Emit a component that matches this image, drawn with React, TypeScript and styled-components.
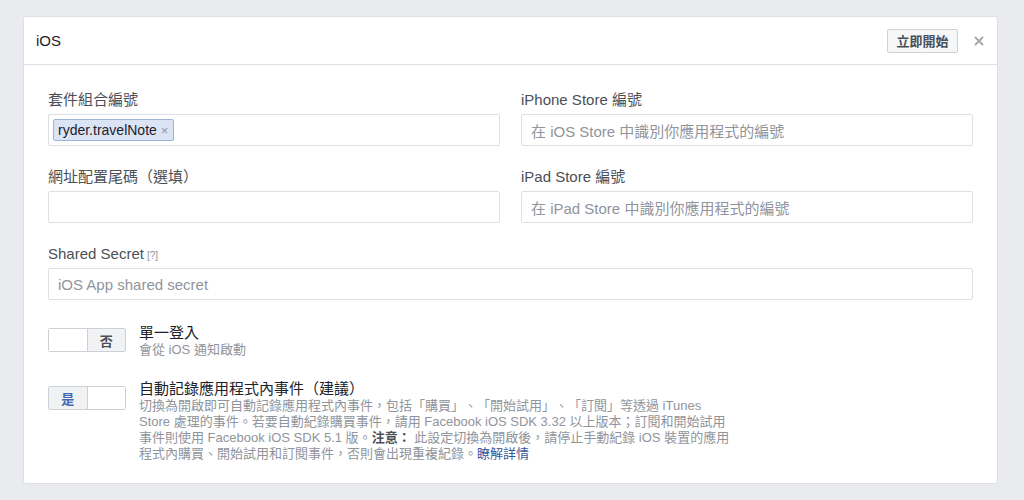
import React from 'react';
import styled, { createGlobalStyle } from 'styled-components';

const GlobalStyle = createGlobalStyle`
  body {
    margin: 0;
    background: #e9ebee;
    font-family: Helvetica, Arial, "Liberation Sans", "Noto Sans CJK TC", sans-serif;
    color: #1d2129;
    text-spacing-trim: space-all;
  }
`;

const Page = styled.div`
  padding: 16px 26px 15px 23px;
`;

const Card = styled.div`
  background: #fff;
  border: 1px solid #dddfe2;
  border-radius: 3px;
`;

const Header = styled.div`
  display: flex;
  align-items: center;
  height: 47px;
  padding: 0 12px;
  border-bottom: 1px solid #dddfe2;
`;

const Title = styled.div`
  flex: 1;
  font-size: 15px;
  color: #1d2129;
`;

const StartButton = styled.button`
  font-family: inherit;
  font-size: 13px;
  font-weight: bold;
  color: #4b4f56;
  background: #f6f7f9;
  border: 1px solid #ced0d4;
  border-radius: 2px;
  height: 24px;
  width: 71px;
  padding: 0;
`;

const Close = styled.span`
  margin-left: 16px;
  margin-right: 1px;
  display: flex;
  align-items: center;
`;

const Body = styled.div`
  padding: 26px 24px 21px 24px;
`;

const Grid = styled.div`
  display: grid;
  grid-template-columns: 1fr 1fr;
  column-gap: 21px;
  row-gap: 22px;
`;

const Field = styled.div<{ $full?: boolean }>`
  grid-column: ${(p) => (p.$full ? '1 / span 2' : 'auto')};
  display: flex;
  flex-direction: column;
`;

const Label = styled.label`
  display: flex;
  align-items: baseline;
  font-size: 15px;
  color: #4b4f56;
  line-height: 18px;
  height: 18px;
  margin-bottom: 5px;
`;

const Hint = styled.span`
  font-size: 10px;
  line-height: 10px;
  color: #90949c;
  margin-left: 3px;
`;

const Input = styled.div`
  box-sizing: border-box;
  height: 32px;
  border: 1px solid #dddfe2;
  border-radius: 2px;
  display: flex;
  align-items: center;
  padding: 0 8px 0 4px;
  font-size: 15px;
  color: #90949c;
`;

const PlaceholderText = styled.span`
  padding-left: 5px;
`;

const Tag = styled.span`
  display: inline-flex;
  align-items: center;
  height: 22px;
  box-sizing: border-box;
  padding: 0 5px 0 4px;
  background: #dbe4f4;
  border: 1px solid #9cb4d8;
  border-radius: 2px;
  font-size: 14px;
  color: #1d2129;
`;

const TagX = styled.span`
  margin-left: 4px;
  font-size: 13px;
  color: #9197a3;
`;

const SwitchRow = styled.div`
  display: flex;
  align-items: flex-start;
  margin-top: 28px;
`;

const Switch = styled.div`
  display: flex;
  width: 78px;
  height: 24px;
  box-sizing: border-box;
  border: 1px solid #ccd0d5;
  border-radius: 2px;
  overflow: hidden;
  flex-shrink: 0;
`;

const SwitchHalf = styled.div<{ $on?: boolean; $blue?: boolean }>`
  flex: 1;
  display: flex;
  align-items: center;
  justify-content: center;
  font-size: 13px;
  font-weight: bold;
  background: ${(p) => (p.$on ? '#f1f2f4' : '#fff')};
  color: ${(p) => (p.$blue ? '#4267b2' : '#4b4f56')};
  & + & {
    border-left: 1px solid #ccd0d5;
  }
`;

const SwitchText = styled.div<{ $lift: number }>`
  margin-left: 13px;
  margin-top: -${(p) => p.$lift}px;
`;

const SwitchTitle = styled.div`
  font-size: 15px;
  color: #1d2129;
  line-height: 18px;
`;

const SwitchDesc = styled.div`
  font-size: 13px;
  color: #90949c;
  line-height: 16px;
  white-space: nowrap;
`;

const Strong = styled.b`
  color: #4b4f56;
`;

const Link = styled.a`
  color: #365899;
  text-decoration: none;
`;

const App: React.FC = () => {
  return (
    <Page>
      <GlobalStyle />
      <Card>
        <Header>
          <Title>iOS</Title>
          <StartButton>立即開始</StartButton>
          <Close>
            <svg width="10" height="10" viewBox="0 0 10 10">
              <path d="M1 1L9 9M9 1L1 9" stroke="#a4a7ae" strokeWidth="1.8" />
            </svg>
          </Close>
        </Header>
        <Body>
          <Grid>
            <Field>
              <Label>套件組合編號</Label>
              <Input>
                <Tag>
                  ryder.travelNote<TagX>×</TagX>
                </Tag>
              </Input>
            </Field>
            <Field>
              <Label>iPhone Store 編號</Label>
              <Input>
                <PlaceholderText>在 iOS Store 中識別你應用程式的編號</PlaceholderText>
              </Input>
            </Field>
            <Field>
              <Label>網址配置尾碼（選填）</Label>
              <Input />
            </Field>
            <Field>
              <Label>iPad Store 編號</Label>
              <Input>
                <PlaceholderText>在 iPad Store 中識別你應用程式的編號</PlaceholderText>
              </Input>
            </Field>
            <Field $full>
              <Label>
                Shared Secret<Hint>[?]</Hint>
              </Label>
              <Input>
                <PlaceholderText>iOS App shared secret</PlaceholderText>
              </Input>
            </Field>
          </Grid>

          <SwitchRow>
            <Switch>
              <SwitchHalf />
              <SwitchHalf $on>否</SwitchHalf>
            </Switch>
            <SwitchText $lift={4}>
              <SwitchTitle>單一登入</SwitchTitle>
              <SwitchDesc>會從 iOS 通知啟動</SwitchDesc>
            </SwitchText>
          </SwitchRow>

          <SwitchRow>
            <Switch>
              <SwitchHalf $on $blue>是</SwitchHalf>
              <SwitchHalf />
            </Switch>
            <SwitchText $lift={6}>
              <SwitchTitle>自動記錄應用程式內事件（建議）</SwitchTitle>
              <SwitchDesc>
                切換為開啟即可自動記錄應用程式內事件，包括「購買」、「開始試用」、「訂閱」等透過 iTunes
                <br />
                Store 處理的事件。若要自動紀錄購買事件，請用 Facebook iOS SDK 3.32 以上版本；訂閱和開始試用
                <br />
                事件則使用 Facebook iOS SDK 5.1 版。<Strong>注意：</Strong> 此設定切換為開啟後，請停止手動紀錄 iOS 裝置的應用
                <br />
                程式內購買、開始試用和訂閱事件，否則會出現重複紀錄。<Link href="#">瞭解詳情</Link>
              </SwitchDesc>
            </SwitchText>
          </SwitchRow>
        </Body>
      </Card>
    </Page>
  );
};

export default App;
